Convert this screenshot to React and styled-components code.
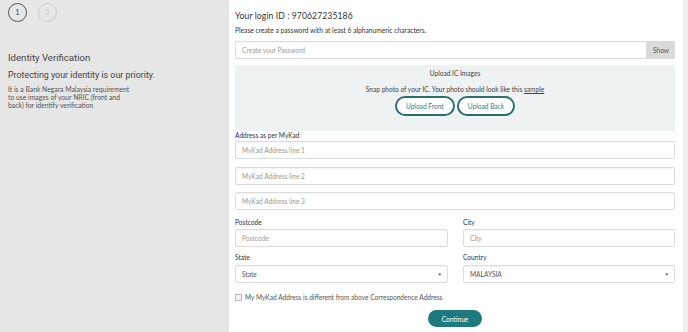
import React from "react";
import styled, { createGlobalStyle } from "styled-components";

const Global = createGlobalStyle`
  html, body { margin: 0; padding: 0; }
  body {
    font-family: Lato, "Open Sans", sans-serif;
    background: #ffffff;
    color: #444;
  }
`;

const Page = styled.div`
  display: flex;
  width: 688px;
  height: 332px;
  overflow: hidden;
`;

const Side = styled.div`
  width: 229px;
  flex-shrink: 0;
  background: #e6e6e6;
  padding: 3px 8px 0 8px;
  box-sizing: border-box;
`;

const Steps = styled.div`
  display: flex;
  gap: 11px;
`;

const Step = styled.div`
  width: 17px;
  height: 17px;
  border-radius: 50%;
  border: 1px solid ${(p) => (p.active ? "#555" : "#ccc")};
  color: ${(p) => (p.active ? "#444" : "#ccc")};
  font-size: 7.5px;
  display: flex;
  align-items: center;
  justify-content: center;
`;

const SideTitle = styled.div`
  margin-top: 30px;
  font-family: Roboto, "Liberation Sans", sans-serif;
  font-size: 9.6px;
  line-height: 12px;
  color: #444;
`;

const SideSub = styled.div`
  margin-top: 5px;
  font-family: Roboto, "Liberation Sans", sans-serif;
  font-size: 8.9px;
  line-height: 12px;
  color: #444;
`;

const SideNote = styled.div`
  margin-top: 4px;
  font-size: 6.8px;
  line-height: 8px;
  color: #555;
  width: 124px;
`;

const Main = styled.div`
  width: 454px;
  flex-shrink: 0;
  padding: 10px 8px 0 6px;
  box-sizing: border-box;
  background: #fff;
`;

const Edge = styled.div`
  flex: 1;
  background: #eeeeee;
`;

const LoginId = styled.div`
  font-size: 8.6px;
  line-height: 12px;
  color: #333;
  letter-spacing: 0.1px;
`;

const Hint = styled.div`
  margin-top: 4px;
  font-size: 6.7px;
  line-height: 9px;
  color: #333;
`;

const PassRow = styled.div`
  display: flex;
  margin-top: 6px;
  height: 18px;
`;

const Field = styled.div`
  flex: ${(p) => (p.grow ? 1 : "none")};
  height: 18px;
  box-sizing: border-box;
  border: 1px solid #dcdcdc;
  border-radius: ${(p) => (p.flat ? "0" : "2px")};
  box-shadow: inset 0 1px 1px rgba(0, 0, 0, 0.04);
  display: flex;
  align-items: center;
  justify-content: space-between;
  padding: 0 5px 0 6px;
  font-size: 6.6px;
  color: #999;
  background: #fff;
`;

const ShowBtn = styled.div`
  width: 28px;
  background: #dadada;
  display: flex;
  align-items: center;
  justify-content: center;
  font-size: 6.6px;
  color: #555;
`;

const UploadBox = styled.div`
  margin-top: 6px;
  height: 66px;
  background: #eef2f3;
  display: flex;
  flex-direction: column;
  align-items: center;
  padding-top: 4px;
  box-sizing: border-box;
`;

const UploadTitle = styled.div`
  font-size: 6.6px;
  line-height: 8px;
  color: #444;
`;

const UploadText = styled.div`
  margin-top: 8px;
  font-size: 6.6px;
  line-height: 8px;
  color: #444;
  span { text-decoration: underline; }
`;

const BtnRow = styled.div`
  display: flex;
  gap: 2px;
  margin-top: 3px;
`;

const Outline = styled.div`
  height: 20px;
  box-sizing: border-box;
  padding: 0 9px;
  border: 2px solid #2a6f73;
  border-radius: 11px;
  background: #fff;
  color: #2f7d84;
  font-size: 6.6px;
  display: flex;
  align-items: center;
`;

const Label = styled.div`
  font-size: 6.6px;
  line-height: 8px;
  color: #333;
  margin: ${(p) => p.m || "0"};
`;

const Stack = styled.div`
  display: flex;
  flex-direction: column;
  gap: 7.5px;
  margin-top: 2px;
`;

const Grid = styled.div`
  display: grid;
  grid-template-columns: 213px 212px;
  column-gap: 15px;
  margin-top: 8px;
`;

const Col = styled.div`
  display: flex;
  flex-direction: column;
`;

const Select = styled(Field)`
  color: #555;
  padding-left: 6px;
`;

const Arrow = styled.span`
  font-size: 4.5px;
  color: #555;
`;

const Check = styled.label`
  display: flex;
  align-items: center;
  gap: 3px;
  margin-top: 10px;
  font-size: 6.6px;
  line-height: 8px;
  color: #555;
`;

const Box = styled.span`
  width: 5px;
  height: 5px;
  border: 1px solid #bbb;
  background: #f4f4f4;
`;

const Footer = styled.div`
  display: flex;
  justify-content: center;
  margin-top: 9px;
`;

const Continue = styled.div`
  width: 54px;
  height: 17px;
  border-radius: 9px;
  background: #1f7a80;
  color: #fff;
  font-size: 6.6px;
  display: flex;
  align-items: center;
  justify-content: center;
`;

export default function App() {
  return (
    <Page>
      <Global />
      <Side>
        <Steps>
          <Step active>1</Step>
          <Step>2</Step>
        </Steps>
        <SideTitle>Identity Verification</SideTitle>
        <SideSub>Protecting your identity is our priority.</SideSub>
        <SideNote>
          It is a Bank Negara Malaysia requirement to use images of your NRIC (front and back) for identify verification
        </SideNote>
      </Side>
      <Main>
        <LoginId>Your login ID : 970627235186</LoginId>
        <Hint>Please create a password with at least 6 alphanumeric characters.</Hint>
        <PassRow>
          <Field grow flat>Create your Password</Field>
          <ShowBtn>Show</ShowBtn>
        </PassRow>
        <UploadBox>
          <UploadTitle>Upload IC Images</UploadTitle>
          <UploadText>
            Snap photo of your IC. Your photo should look like this <span>sample</span>
          </UploadText>
          <BtnRow>
            <Outline>Upload Front</Outline>
            <Outline>Upload Back</Outline>
          </BtnRow>
        </UploadBox>
        <Label m="0">Address as per MyKad</Label>
        <Stack>
          <Field>MyKad Address line 1</Field>
          <Field>MyKad Address line 2</Field>
          <Field>MyKad Address line 3</Field>
        </Stack>
        <Grid>
          <Col>
            <Label m="0 0 3px 0">Postcode</Label>
            <Field>Postcode</Field>
            <Label m="6px 0 4px 0">State</Label>
            <Select>
              State<Arrow>▼</Arrow>
            </Select>
          </Col>
          <Col>
            <Label m="0 0 3px 0">City</Label>
            <Field>City</Field>
            <Label m="6px 0 4px 0">Country</Label>
            <Select>
              MALAYSIA<Arrow>▼</Arrow>
            </Select>
          </Col>
        </Grid>
        <Check>
          <Box />
          My MyKad Address is different from above Correspondence Address
        </Check>
        <Footer>
          <Continue>Continue</Continue>
        </Footer>
      </Main>
      <Edge />
    </Page>
  );
}
